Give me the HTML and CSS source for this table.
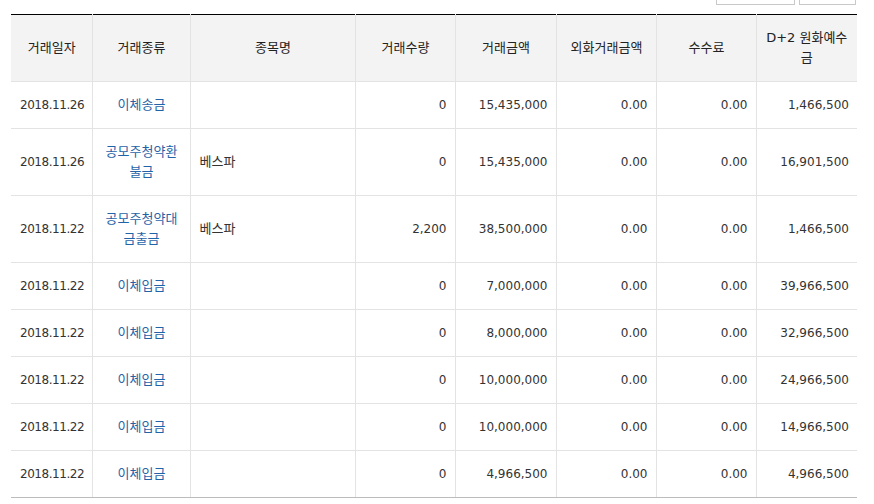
FILE: index.html
```html
<!DOCTYPE html>
<html lang="ko">
<head>
<meta charset="utf-8">
<title>거래내역</title>
<link rel="stylesheet" href="styles.css">
</head>
<body>
<div class="page">
  <div class="toolbar">
    <button class="btn btn-wide" type="button" aria-label="조회"></button>
    <button class="btn btn-narrow" type="button" aria-label="인쇄"></button>
  </div>
  <table class="grid">
    <colgroup>
      <col class="c-date"><col class="c-type"><col class="c-name"><col class="c-qty">
      <col class="c-amt"><col class="c-fx"><col class="c-fee"><col class="c-bal">
    </colgroup>
    <thead>
      <tr>
        <th>거래일자</th><th>거래종류</th><th>종목명</th><th>거래수량</th>
        <th>거래금액</th><th>외화거래금액</th><th>수수료</th><th class="nowrap">D+2 원화예수<br>금</th>
      </tr>
    </thead>
    <tbody>
      <tr><td class="ctr date">2018.11.26</td><td class="ctr"><a class="lnk" href="#">이체송금</a></td><td class="name"></td><td class="num">0</td><td class="num">15,435,000</td><td class="num">0.00</td><td class="num">0.00</td><td class="num">1,466,500</td></tr>
      <tr><td class="ctr date">2018.11.26</td><td class="ctr"><a class="lnk" href="#">공모주청약환<br>불금</a></td><td class="name">베스파</td><td class="num">0</td><td class="num">15,435,000</td><td class="num">0.00</td><td class="num">0.00</td><td class="num">16,901,500</td></tr>
      <tr><td class="ctr date">2018.11.22</td><td class="ctr"><a class="lnk" href="#">공모주청약대<br>금출금</a></td><td class="name">베스파</td><td class="num">2,200</td><td class="num">38,500,000</td><td class="num">0.00</td><td class="num">0.00</td><td class="num">1,466,500</td></tr>
      <tr><td class="ctr date">2018.11.22</td><td class="ctr"><a class="lnk" href="#">이체입금</a></td><td class="name"></td><td class="num">0</td><td class="num">7,000,000</td><td class="num">0.00</td><td class="num">0.00</td><td class="num">39,966,500</td></tr>
      <tr><td class="ctr date">2018.11.22</td><td class="ctr"><a class="lnk" href="#">이체입금</a></td><td class="name"></td><td class="num">0</td><td class="num">8,000,000</td><td class="num">0.00</td><td class="num">0.00</td><td class="num">32,966,500</td></tr>
      <tr><td class="ctr date">2018.11.22</td><td class="ctr"><a class="lnk" href="#">이체입금</a></td><td class="name"></td><td class="num">0</td><td class="num">10,000,000</td><td class="num">0.00</td><td class="num">0.00</td><td class="num">24,966,500</td></tr>
      <tr><td class="ctr date">2018.11.22</td><td class="ctr"><a class="lnk" href="#">이체입금</a></td><td class="name"></td><td class="num">0</td><td class="num">10,000,000</td><td class="num">0.00</td><td class="num">0.00</td><td class="num">14,966,500</td></tr>
      <tr><td class="ctr date">2018.11.22</td><td class="ctr"><a class="lnk" href="#">이체입금</a></td><td class="name"></td><td class="num">0</td><td class="num">4,966,500</td><td class="num">0.00</td><td class="num">0.00</td><td class="num">4,966,500</td></tr>
    </tbody>
  </table>
</div>
</body>
</html>
```

FILE: styles.css
```css
html, body {
  margin: 0;
  padding: 0;
  background: #fff;
}

body {
  font-family: "DejaVu Sans", "Noto Sans CJK KR", sans-serif;
  font-size: 12px;
  color: #333;
}

.page {
  padding: 0 17px 0 11px;
  overflow: hidden;
  height: 504px;
  box-sizing: border-box;
}

.toolbar {
  height: 5px;
  display: flex;
  justify-content: flex-end;
  align-items: flex-end;
  gap: 4px;
  padding-right: 1px;
  margin-bottom: 9px;
}

.btn {
  flex: none;
  height: 28px;
  border: 1px solid #c9c9c9;
  background: #fff;
  padding: 0;
}

.btn-wide { width: 79px; }
.btn-narrow { width: 57px; }

.grid {
  width: 846px;
  border-collapse: collapse;
  table-layout: fixed;
  border-top: 1px solid #000;
  border-bottom: 1px solid #bcbcbc;
}

.c-date { width: 81px; }
.c-type { width: 98px; }
.c-name { width: 165px; }
.c-qty { width: 100px; }
.c-amt { width: 101px; }
.c-fx { width: 100px; }
.c-fee { width: 100px; }
.c-bal { width: 101px; }

.grid th,
.grid td {
  padding: 13px 8px 13px 9px;
  line-height: 20px;
  border-left: 1px solid #e3e3e3;
  border-bottom: 1px solid #e3e3e3;
  vertical-align: middle;
}

.grid th:first-child,
.grid td:first-child {
  border-left: 0;
}

.grid th {
  background: #f3f3f3;
  color: #222;
  font-size: 13px;
  font-weight: normal;
  text-align: center;
}

.grid th.nowrap {
  white-space: nowrap;
  padding-left: 4px;
  padding-right: 4px;
}

.grid td {
  text-align: left;
  color: #333;
}

.grid td.name {
  font-size: 13px;
}

.grid tbody tr:last-child td {
  border-bottom: 1px solid #bcbcbc;
}

.grid td.ctr { text-align: center; }
.grid td.num { text-align: right; }
.grid td.date { letter-spacing: -0.45px; }

.lnk {
  color: #1f63a8;
  font-size: 13px;
  text-decoration: none;
}
```
